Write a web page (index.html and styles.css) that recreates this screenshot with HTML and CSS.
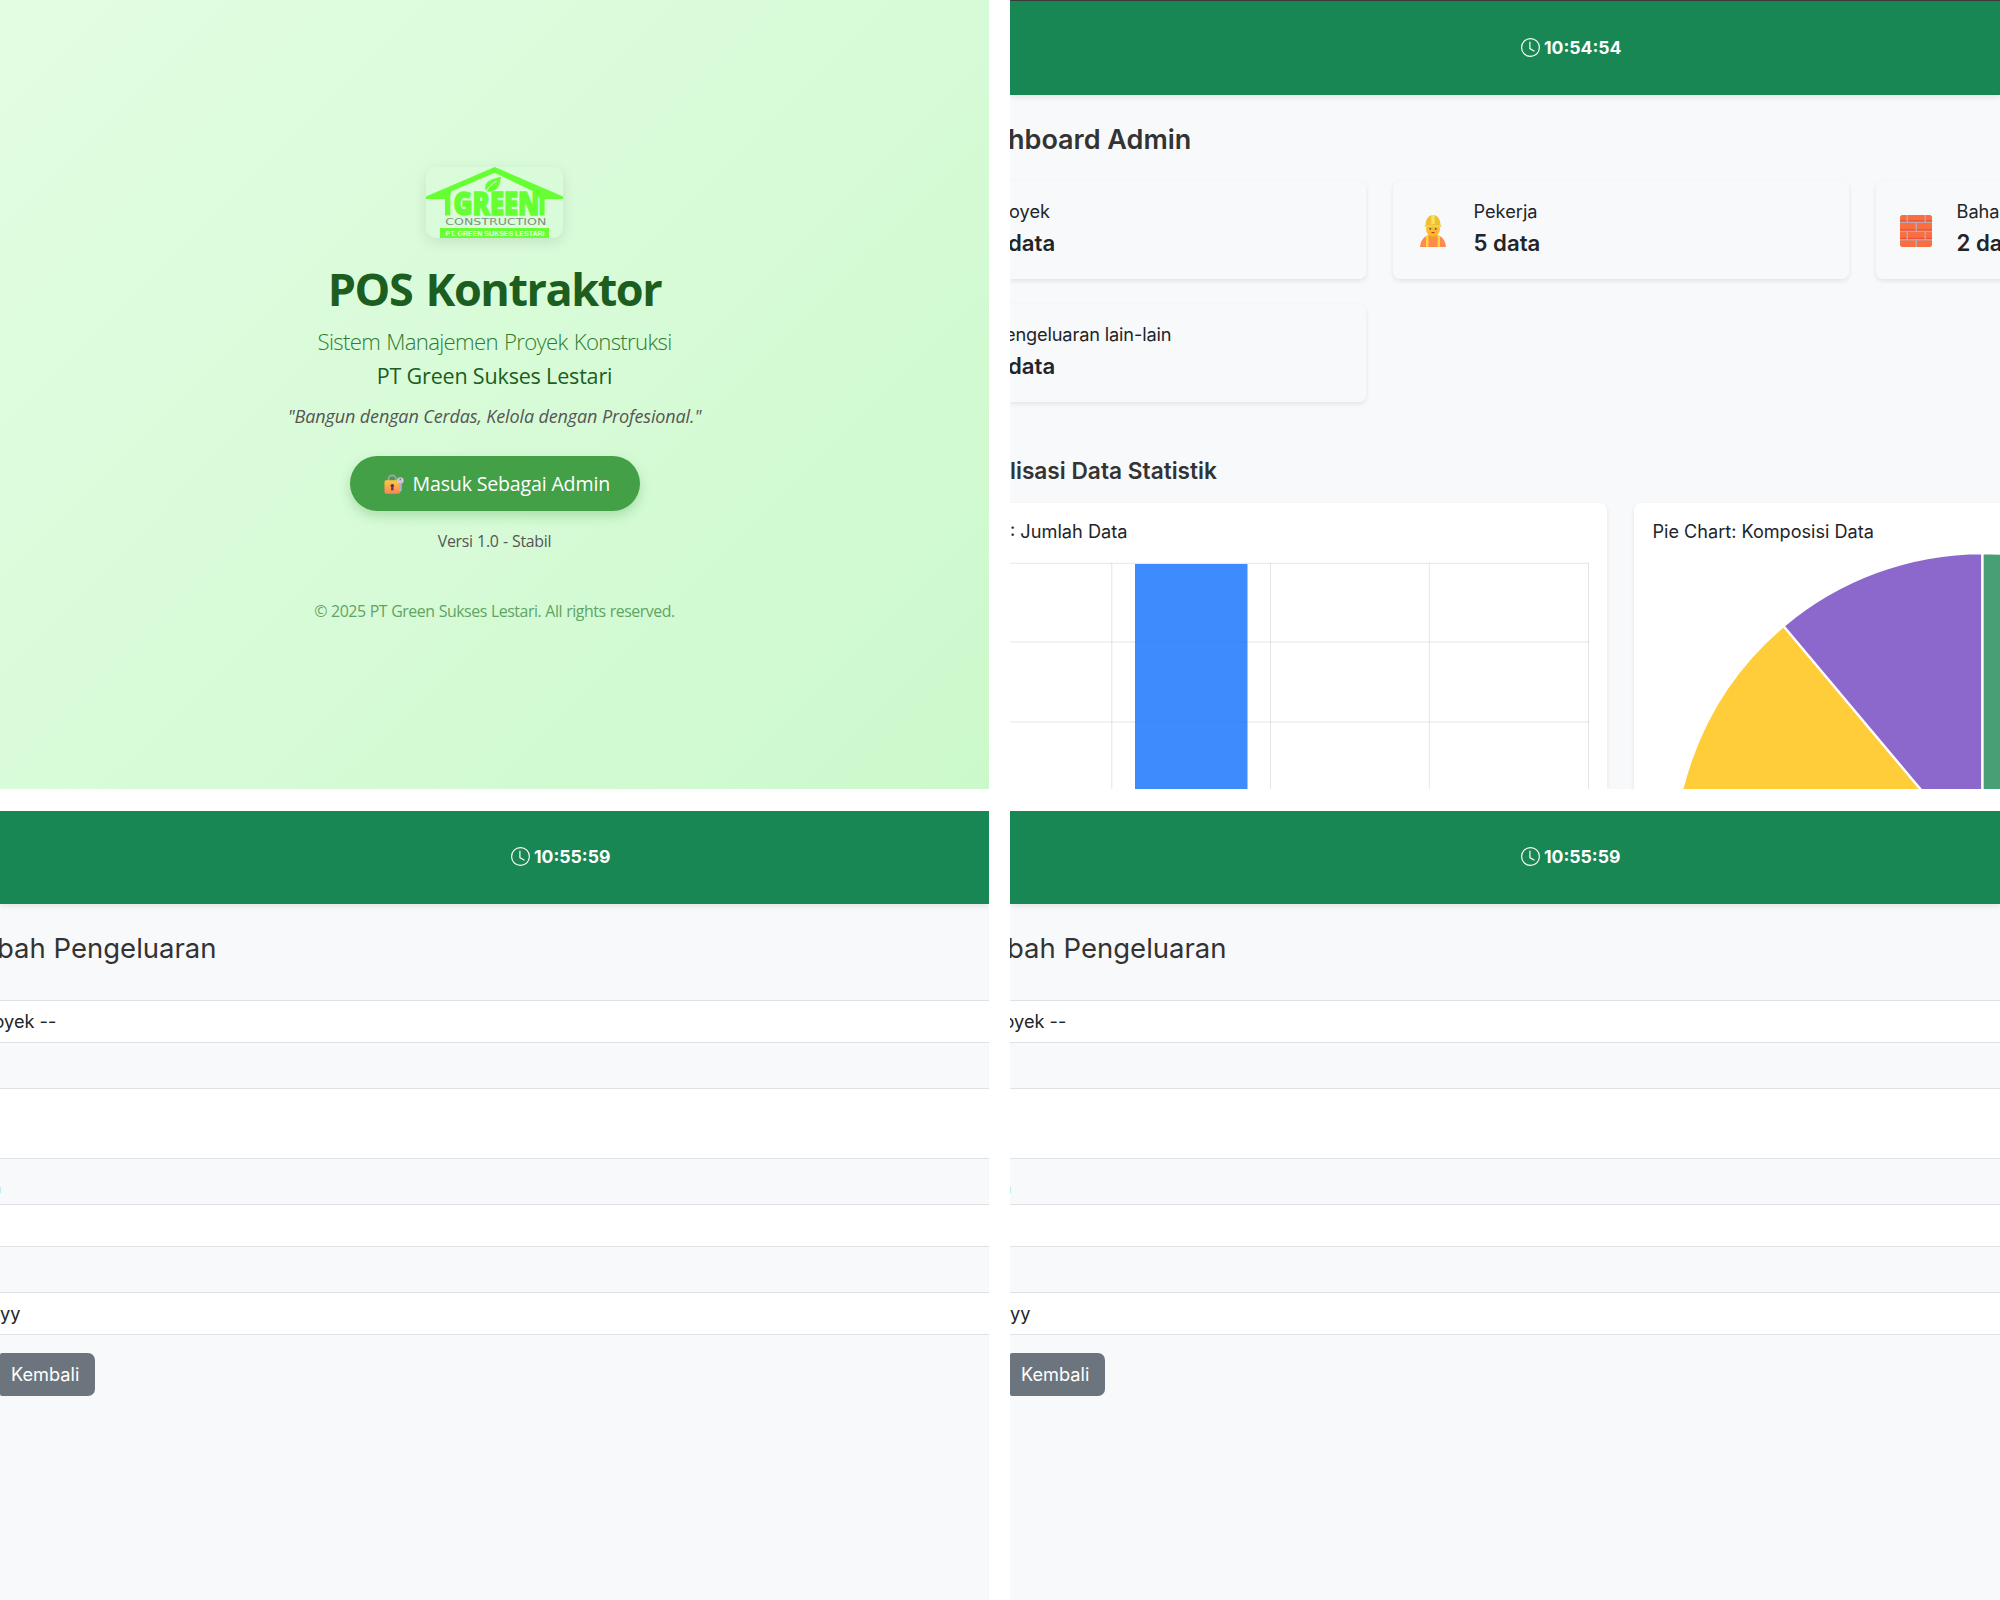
FILE: index.html
```html
<!DOCTYPE html>
<html lang="id">
<head>
<meta charset="utf-8">
<title>POS Kontraktor</title>
<link rel="stylesheet" href="styles.css">
</head>
<body>
<svg class="defs" width="0" height="0">
  <symbol id="clock" viewBox="0 0 16 16">
    <path d="M8 3.5a.5.5 0 0 0-1 0V9a.5.5 0 0 0 .252.434l3.5 2a.5.5 0 0 0 .496-.868L8 8.71z"/>
    <path d="M8 16A8 8 0 1 0 8 0a8 8 0 0 0 0 16m7-8A7 7 0 1 1 1 8a7 7 0 0 1 14 0"/>
  </symbol>
</svg>
<main class="board">

  <section class="panel landing">
    <svg class="logo" viewBox="0 0 137 71">
      <g fill="#66ff33">
        <path d="M68.7 0 137 29.5V32H118.6V48.5H113.500V31L110 28V25.8L68.7 5.8 25 24.5 24.3 29V48.5H19V32H0V29.5Z"/>
        <path d="M75 10C67 11.5 57.500 14 59.500 22.500L61 24.500C69 25.500 74 21 75 10Z"/>
        <rect x="14" y="61" width="109" height="10"/>
      </g>
      <path d="M60.500 24C63 19 66.500 16.500 71 14" fill="none" stroke="#dbfadb" stroke-width="1"/>
      <text class="logo-name" x="27.500" y="47.800" textLength="86" lengthAdjust="spacingAndGlyphs">GREEN</text>
      <text class="logo-kind" x="19.300" y="58" textLength="101" lengthAdjust="spacingAndGlyphs">CONSTRUCTION</text>
      <text class="logo-firm" x="19.500" y="68.800" textLength="99" lengthAdjust="spacingAndGlyphs">PT. GREEN SUKSES LESTARI</text>
    </svg>
    <h1 class="brand">POS Kontraktor</h1>
    <p class="tagline">Sistem Manajemen Proyek Konstruksi</p>
    <p class="firm">PT Green Sukses Lestari</p>
    <p class="motto">"Bangun dengan Cerdas, Kelola dengan Profesional."</p>
    <a class="login">
      <svg class="lock" viewBox="0 0 20 20">
        <defs><linearGradient id="lk" x1="0" y1="0" x2="0" y2="1"><stop offset="0" stop-color="#ffc83d"/><stop offset="1" stop-color="#ff8257"/></linearGradient></defs>
        <path d="M4.500 8V5a3.700 3.700 0 0 1 7.400 0v3" fill="none" stroke="#a79fb3" stroke-width="1.700"/>
        <rect x=".5" y="6.300" width="15.500" height="13.400" rx="1.600" fill="url(#lk)"/>
        <circle cx="8.300" cy="11.700" r="1.800" fill="#4a3b57"/><path d="M7.500 12h1.600l.5 4.200H7z" fill="#4a3b57"/>
        <circle cx="16.300" cy="6.600" r="3.400" fill="#cdc4d6"/><path d="M15 9h2.800v7.500l-1.500 1.500-1.300-1.200z" fill="#b9abc9"/><circle cx="16.300" cy="5.400" r=".8" fill="#7d6e8c"/>
      </svg>
      <span>Masuk Sebagai Admin</span>
    </a>
    <p class="version">Versi 1.0 - Stabil</p>
    <p class="copyright">© 2025 PT Green Sukses Lestari. All rights reserved.</p>
  </section>

  <section class="panel dashboard">
    <header class="navbar"><svg class="clock"><use href="#clock"/></svg><span>10:54:54</span></header>
    <h2 class="page-title">hboard Admin</h2>
    <div class="stats">
      <article class="stat stat-cut"><div><p class="label">oyek</p><p class="value">data</p></div></article>
      <article class="stat">
        <svg class="emoji" viewBox="0 0 32 32">
          <path d="M3 32c.6-6.500 4-11 9-12h8c5 1 8.400 5.500 9 12z" fill="#ff8a4f"/>
          <path d="M9 21l2.500-1.200V32H9zM20.500 19.800L23 21v11h-2.500z" fill="#ffd23e"/>
          <path d="M12.500 19h7L19 24h-6z" fill="#f59a23"/>
          <ellipse cx="16" cy="14" rx="7" ry="7.500" fill="#ffb92e"/>
          <path d="M8.500 11C8.500 4 11.500 0 16 0s7.500 4 7.500 11z" fill="#efc02f"/>
          <path d="M14.300 0h3.400v9h-3.400z" fill="#ffe05a"/>
          <rect x="7.500" y="10" width="17" height="1.800" rx=".9" fill="#f3d34f"/>
          <circle cx="13.300" cy="13.800" r=".9" fill="#5b4035"/><circle cx="18.700" cy="13.800" r=".9" fill="#5b4035"/>
          <path d="M14.500 17.600h3" stroke="#c0392b" stroke-width="1.200"/>
        </svg>
        <div><p class="label">Pekerja</p><p class="value">5 data</p></div>
      </article>
      <article class="stat">
        <svg class="emoji" viewBox="0 0 32 32">
          <defs><clipPath id="bc"><rect width="32" height="32" rx="3"/></clipPath></defs>
          <g clip-path="url(#bc)"><rect width="32" height="32" fill="#b9a6ae"/>
          <g fill="#fb6f3f"><rect x="-3" width="9.500" height="6.500"/><rect x="8" width="16.500" height="6.500"/><rect x="26" width="8" height="6.500"/>
          <rect y="8" width="15.500" height="7.500"/><rect x="17" y="8" width="15" height="7.500"/>
          <rect x="-3" y="17" width="9.500" height="7"/><rect x="8" y="17" width="16.500" height="7"/><rect x="26" y="17" width="8" height="7"/>
          <rect y="25.500" width="15.500" height="7"/><rect x="17" y="25.500" width="15" height="7"/></g>
          <path d="M8 5.900h16.500M0 14.900h15.500M17 14.900h15M8 23.400h16.500M26 5.900h6M26 23.400h6M0 5.900h6.500M0 23.400h6.500" stroke="#ea5040" stroke-width="1.200"/></g>
        </svg>
        <div><p class="label">Bahan</p><p class="value">2 da</p></div>
      </article>
      <article class="stat stat-cut"><div><p class="label label-long">engeluaran lain-lain</p><p class="value">data</p></div></article>
    </div>
    <h3 class="section-title">lisasi Data Statistik</h3>
    <div class="charts">
      <article class="chart chart-cut">
        <p class="label">: Jumlah Data</p>
        <svg class="bars" viewBox="0 0 579 227">
          <path d="M0 1.300H579M0 80H579M0 160H579M101.800 1V227M260.500 1V227M419.300 1V227M578.500 1V227" stroke="#000" stroke-opacity=".1"/>
          <rect x="125" y="2" width="112.500" height="225" fill="#0d6efd" fill-opacity=".8"/>
        </svg>
      </article>
      <article class="chart chart-pie">
        <p class="label">Pie Chart: Komposisi Data</p>
        <svg class="pie" viewBox="0 0 366 236">
          <g stroke="#fff" stroke-width="2.300">
            <path d="M348.500 310L149.500 73A309.700 309.700 0 0 0 45 368Z" fill="#ffcd39"/>
            <path d="M348.500 310L149.500 73A309.700 309.700 0 0 1 348.500 0Z" fill="#8c68cd"/>
            <path d="M348.500 310V0A309.700 309.700 0 0 1 600 130Z" fill="#479f76"/>
          </g>
        </svg>
      </article>
    </div>
  </section>

  <section class="panel form-page">
    <header class="navbar"><svg class="clock"><use href="#clock"/></svg><span>10:55:59</span></header>
    <h2 class="page-title">bah Pengeluaran</h2>
    <div class="fields">
      <div class="field field-project">oyek --</div>
      <div class="field field-area"></div>
      <div class="field field-marked"></div>
      <div class="field">yy</div>
    </div>
    <a class="back">Kembali</a>
  </section>

  <section class="panel form-page">
    <header class="navbar"><svg class="clock"><use href="#clock"/></svg><span>10:55:59</span></header>
    <h2 class="page-title">bah Pengeluaran</h2>
    <div class="fields">
      <div class="field field-project">oyek --</div>
      <div class="field field-area"></div>
      <div class="field field-marked"></div>
      <div class="field">yy</div>
    </div>
    <a class="back">Kembali</a>
  </section>
</main>
</body>
</html>
```
FILE: styles.css
```css
* { box-sizing: border-box; }
body { margin: 0; background: #fff; font-family: Inter, sans-serif; color: #212529; }
h1, h2, h3, p { margin: 0; }
svg { display: block; flex: none; }
.defs { position: absolute; }

.board {
  display: grid;
  grid-template: 789px 789px / 989px 990px;
  gap: 22px 21px;
  width: 2000px;
  height: 1600px;
}
.panel { overflow: hidden; background: #f8f9fb; white-space: nowrap; }

/* Landing */
.landing {
  display: flex;
  flex-direction: column;
  align-items: center;
  padding-top: 167px;
  background: linear-gradient(135deg, #e3fde3, #ccf9cc);
  font-family: "Open Sans", sans-serif;
}
.logo {
  width: 137px;
  height: 71px;
  border-radius: 10px;
  box-shadow: 0 4px 14px rgba(0, 0, 0, .1);
}
.logo-name { font: 800 31px "Open Sans", sans-serif; fill: #66ff33; stroke: #66ff33; stroke-width: 1.400; }
.logo-kind { font: 400 9px "DejaVu Sans", sans-serif; fill: #7f9180; }
.logo-firm { font: 700 7.800px "Liberation Sans", sans-serif; fill: #e6ffe0; }
.brand { margin-top: 21px; font-size: 45px; line-height: 60px; font-weight: 700; letter-spacing: -1.450px; word-spacing: 3px; color: #1b5e20; }
.tagline { margin-top: 8px; font-size: 22.200px; line-height: 30px; font-weight: 300; letter-spacing: -.680px; word-spacing: 1px; color: #2e7d32; }
.firm { margin-top: 4px; font-size: 21.500px; line-height: 30px; letter-spacing: -.170px; color: #1b5e20; }
.motto { margin-top: 12px; font-size: 18px; line-height: 26px; font-style: italic; letter-spacing: -.130px; color: #555; }
.login {
  display: flex;
  align-items: center;
  gap: 9px;
  width: 290px;
  height: 55px;
  margin-top: 27px;
  padding-left: 34px;
  border-radius: 28px;
  background: #43a047;
  box-shadow: 0 5px 12px rgba(67, 160, 71, .3);
  color: #fff;
  font-size: 19.600px;
  letter-spacing: -.180px;
}
.login span { margin-top: -1px; }
.lock { width: 20px; height: 20px; }
.version { margin-top: 18px; font-size: 15.900px; line-height: 24px; letter-spacing: -.300px; word-spacing: .500px; color: #555; }
.copyright { margin-top: 46px; font-size: 15.900px; line-height: 24px; letter-spacing: -.450px; word-spacing: .400px; color: #5fa463; }

/* Shared app chrome */
.navbar {
  display: flex;
  align-items: center;
  gap: 4px;
  height: 92.500px;
  padding: 0 0 1px 511px;
  background: #198754;
  box-shadow: 0 2px 6px rgba(0, 0, 0, .09);
  color: #fff;
  font-size: 17.600px;
  font-weight: 700;
}
.clock { width: 19px; height: 19px; fill: #fff; }
.page-title { font-size: 27px; line-height: 36px; color: #333; }

/* Dashboard */
.dashboard { border-top: 1px solid #3b3b3b; }
.dashboard .navbar { height: 94px; }
.dashboard .page-title { margin: 27px 0 23px -2px; font-weight: 600; }
.stats {
  display: grid;
  grid-template-columns: 356px 456px 456px;
  grid-auto-rows: 98px;
  gap: 25px 27px;
}
.stat {
  display: flex;
  gap: 25px;
  padding: 16px 0 0 23.500px;
  border-radius: 7px;
  box-shadow: 0 2px 5px rgba(0, 0, 0, .09);
}
.stat-cut { padding-left: 0; border-radius: 0 7px 7px 0; }
.stat-cut .label { margin-left: -1px; }
.stat-cut .value { margin-left: -2px; }
.stat-cut .label-long { margin-left: -5px; letter-spacing: -.150px; }
.emoji { width: 32px; height: 32px; margin-top: 18px; }
.label { font-size: 18.200px; line-height: 28px; }
.value { margin-top: 4px; font-size: 22.200px; line-height: 28px; font-weight: 600; }
.section-title { margin: 54px 0 17px; font-size: 22.700px; line-height: 30px; font-weight: 600; color: #333; }
.charts { display: grid; grid-template-columns: 597px 366px; gap: 27px; }
.chart {
  height: 300px;
  padding-top: 14px;
  background: #fff;
  border-radius: 7px 0 0 0;
  box-shadow: 0 2px 5px rgba(0, 0, 0, .09);
}
.chart-cut { border-radius: 0 7px 0 0; }
.chart-pie .label { padding-left: 18.500px; font-size: 18.100px; }
.bars { width: 579px; height: 227px; margin-top: 17px; }
.pie { width: 366px; height: 236px; margin-top: 8px; }

/* Expense form */
.form-page .page-title { margin: 26.500px 0 34px -3px; font-size: 27.500px; font-weight: 400; }
.fields { display: grid; gap: 45px; }
.field {
  position: relative;
  display: flex;
  align-items: center;
  height: 43px;
  padding-bottom: 2px;
  border: solid #dee2e6;
  border-width: 1px 0;
  background: #fff;
  font-size: 18.200px;
}
.field-project { text-indent: -6.500px; }
.field-area { height: 71px; }
/* edge of the required marker that sits above the amount field */
.field-marked::before {
  content: "";
  position: absolute;
  left: 0;
  top: -18px;
  width: 1px;
  height: 6px;
  background: #b9ecf3;
}
.back {
  display: flex;
  align-items: center;
  width: 95px;
  height: 43px;
  margin-top: 18px;
  padding: 0 0 2px 11px;
  border-radius: 2px 7px 7px 2px;
  background: #6c757d;
  color: #fff;
  font-size: 18.200px;
}
```
